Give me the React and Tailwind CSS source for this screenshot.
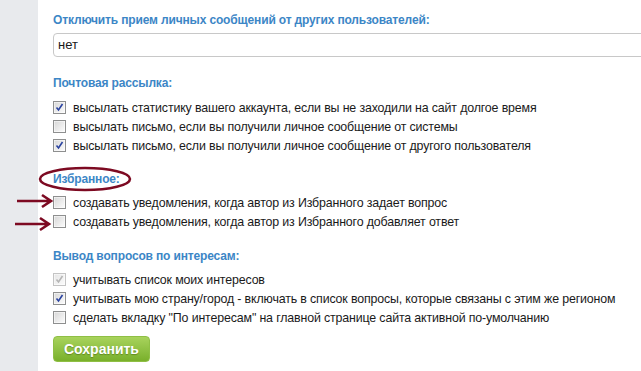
import React from "react";

function Box({ checked, disabled }) {
  return (
    <svg width="13" height="13" viewBox="0 0 13 13" className="shrink-0">
      <defs>
        <linearGradient id={disabled ? "gd" : "g"} x1="0" y1="0" x2="1" y2="1">
          <stop offset="0" stopColor={disabled ? "#e6e6e6" : "#d8d8d8"} />
          <stop offset="1" stopColor="#fbfbfb" />
        </linearGradient>
      </defs>
      <rect x="0.5" y="0.5" width="12" height="12" fill="#fff" stroke={disabled ? "#c4c4c4" : "#8e8f8f"} />
      <rect x="1.5" y="1.5" width="10" height="10" fill={`url(#${disabled ? "gd" : "g"})`} />
      {checked && (
        <path
          d="M3.5 6.5 L5.5 9 L9.5 3"
          fill="none"
          stroke={disabled ? "#b5b5b5" : "#2a43a0"}
          strokeWidth="1.6"
        />
      )}
    </svg>
  );
}

function Row({ checked, disabled, children }) {
  return (
    <div className="flex items-center h-[19px]">
      <Box checked={checked} disabled={disabled} />
      <span className="ml-[7px] text-[12.4px] tracking-[-0.15px] leading-[16px] text-[#1a1a1a] whitespace-nowrap">{children}</span>
    </div>
  );
}

function H({ children, className = "" }) {
  return (
    <div className={`text-[12px] tracking-[-0.15px] leading-[16px] font-bold text-[#3c86c6] whitespace-nowrap ${className}`}>{children}</div>
  );
}

function Arrow({ className }) {
  return (
    <svg width="40" height="16" viewBox="0 0 40 16" className={className}>
      <path d="M1 8 H34 M26 2 L35 8 L26 14" fill="none" stroke="#7d0a22" strokeWidth="2.6" />
    </svg>
  );
}

export default function App() {
  return (
    <div
      className="relative w-[641px] h-[371px] overflow-hidden bg-white flex"
      style={{ fontFamily: '"Liberation Sans", Arial, sans-serif' }}
    >
      <div className="w-[38px] shrink-0 bg-[#e8eaed]" />
      <div className="pl-[15px] pt-[12px] flex-1">
        <H>Отключить прием личных сообщений от других пользователей:</H>
        <div className="mt-[5px] w-[620px] h-[24px] border border-[#c8c8c8] rounded-[4px] flex items-center pl-[4px] text-[13px] text-[#1a1a1a]">
          нет
        </div>
        <H className="mt-[18px]">Почтовая рассылка:</H>
        <div className="mt-[7px]">
          <Row checked>высылать статистику вашего аккаунта, если вы не заходили на сайт долгое время</Row>
          <Row>высылать письмо, если вы получили личное сообщение от системы</Row>
          <Row checked>высылать письмо, если вы получили личное сообщение от другого пользователя</Row>
        </div>
        <div className="relative mt-[16px] w-fit">
          <H>Избранное:</H>
          <svg width="94" height="26" viewBox="0 0 94 26" className="absolute left-[-15px] top-[-5px]">
            <ellipse cx="47" cy="13" rx="45" ry="11" fill="none" stroke="#7d0a22" strokeWidth="2.6" />
          </svg>
        </div>
        <div className="mt-[6px] relative">
          <Arrow className="absolute left-[-37px] top-[0px]" />
          <Arrow className="absolute left-[-39px] top-[23px]" />
          <Row>создавать уведомления, когда автор из Избранного задает вопрос</Row>
          <Row>создавать уведомления, когда автор из Избранного добавляет ответ</Row>
        </div>
        <H className="mt-[17px]">Вывод вопросов по интересам:</H>
        <div className="mt-[6px]">
          <Row checked disabled>учитывать список моих интересов</Row>
          <Row checked>учитывать мою страну/город - включать в список вопросы, которые связаны с этим же регионом</Row>
          <Row>сделать вкладку "По интересам" на главной странице сайта активной по-умолчанию</Row>
        </div>
        <button className="mt-[9px] h-[26px] px-[10px] rounded-[4px] bg-gradient-to-b from-[#a8d35c] to-[#79b02a] border border-[#8fbf45] text-white font-bold text-[14px] leading-[16px] [text-shadow:0_1px_1px_rgba(60,90,10,0.5)]">
          Сохранить
        </button>
      </div>
    </div>
  );
}
